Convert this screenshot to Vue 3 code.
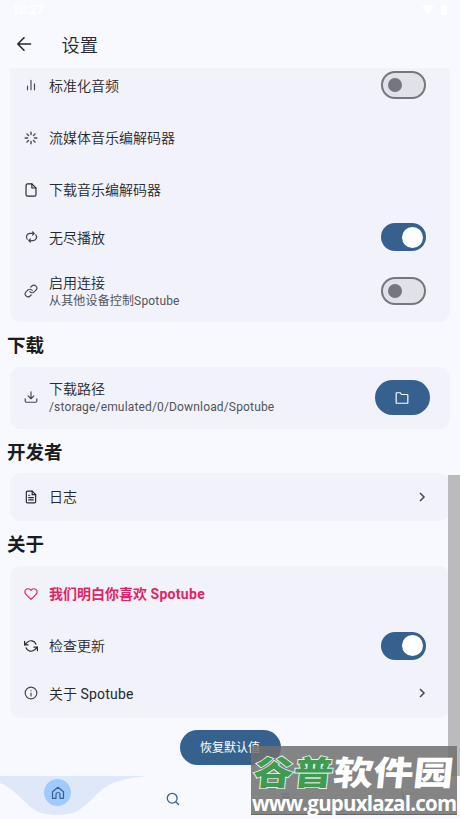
<script setup>
const icons = {
  bars: ['M6 20v-6M12 20V4M18 20V10'],
  loader: ['M12 2v4M12 18v4M4.93 4.93l2.83 2.83M16.24 16.24l2.83 2.83M2 12h4M18 12h4M4.93 19.07l2.83-2.83M16.24 7.76l2.83-2.83'],
  file: ['M13.5 1.5H6a2.5 2.5 0 0 0-2.5 2.5v16A2.5 2.5 0 0 0 6 22.500h12a2.500 2.500 0 0 0 2.500-2.500V8.500z', 'M13.500 1.500v7h7'],
  repeat: ['M14 2.500l3 3-3 3M17 5.500H9a6.500 6.500 0 0 0-5 10.500', 'M10 21.500l-3-3 3-3M7 18.500h8a6.500 6.500 0 0 0 5-10.500'],
  link: ['M10 13a5 5 0 0 0 7.540.54l3-3a5 5 0 0 0-7.070-7.070l-1.720 1.710', 'M14 11a5 5 0 0 0-7.540-.54l-3 3a5 5 0 0 0 7.070 7.070l1.710-1.710'],
  download: ['M22 15v4a2 2 0 0 1-2 2H4a2 2 0 0 1-2-2v-4', 'M7 10l5 5 5-5M12 15V3'],
  doc: ['M14 2H6a2 2 0 0 0-2 2v16a2 2 0 0 0 2 2h12a2 2 0 0 0 2-2V8z', 'M14 2v6h6M16 13H8M16 17H8M10 9H8'],
  heart: ['M20.840 4.610a5.500 5.500 0 0 0-7.780 0L12 5.670l-1.060-1.060a5.500 5.500 0 0 0-7.780 7.780l1.060 1.060L12 21.230l7.780-7.780 1.060-1.060a5.500 5.500 0 0 0 0-7.780z'],
  refresh: ['M1 4v6h6M23 20v-6h-6', 'M20.490 9A9 9 0 0 0 5.640 5.640L1 10m22 4l-4.640 4.360A9 9 0 0 1 3.510 15'],
  info: ['M22 12a10 10 0 1 1-20 0a10 10 0 1 1 20 0z', 'M12 17v-5M12 8v.01']
}

const groups = [
  {
    cls: 'playback',
    rows: [
      { icon: 'bars', title: '标准化音频', h: 49, control: 'off' },
      { icon: 'loader', title: '流媒体音乐编解码器', h: 56 },
      { icon: 'file', title: '下载音乐编解码器', h: 48 },
      { icon: 'repeat', title: '无尽播放', h: 47, control: 'on' },
      { icon: 'link', title: '启用连接', sub: '从其他设备控制Spotube', h: 61, control: 'off' }
    ]
  },
  {
    heading: '下载',
    rows: [{ icon: 'download', title: '下载路径', sub: '/storage/emulated/0/Download/Spotube', h: 62, control: 'folder' }]
  },
  {
    heading: '开发者',
    rows: [{ icon: 'doc', title: '日志', h: 48, control: 'chevron' }]
  },
  {
    heading: '关于',
    rows: [
      { icon: 'heart', title: '我们明白你喜欢 ', app: 'Spotube', h: 57, cls: 'love' },
      { icon: 'refresh', title: '检查更新', h: 47, control: 'on' },
      { icon: 'info', title: '关于 ', app: 'Spotube', h: 48, control: 'chevron' }
    ]
  }
]
</script>

<template>
  <div class="screen">
    <div class="status">
      <span class="clock">10:27</span>
      <svg class="signal" viewBox="0 0 26 12"><path d="M0 3Q6-2 12 3L6 11z" /><path d="M19 1.500h1.500V.5h3v1H25V11h-6z" /></svg>
    </div>
    <header class="appbar">
      <svg class="back" viewBox="0 0 16 16"><path d="M14.500 8H2M8 1.800L1.800 8L8 14.200" /></svg>
      <h1>设置</h1>
    </header>

    <main class="content">
      <section v-for="(g, i) in groups" :key="i">
        <h2 v-if="g.heading">{{ g.heading }}</h2>
        <div class="card" :class="g.cls">
          <div v-for="r in g.rows" :key="r.title" class="row" :class="r.cls" :style="{ height: r.h + 'px' }">
            <svg class="icon" :class="r.icon" viewBox="0 0 24 24">
              <path v-for="d in icons[r.icon]" :key="d" :d="d" />
            </svg>
            <div class="label">
              <div class="title">{{ r.title }}<span v-if="r.app" class="app">{{ r.app }}</span></div>
              <div v-if="r.sub" class="sub">{{ r.sub }}</div>
            </div>
            <span v-if="r.control === 'on' || r.control === 'off'" class="switch" :class="r.control"><i /></span>
            <span v-else-if="r.control === 'folder'" class="folder">
              <svg viewBox="0 0 24 24"><path d="M22 20a1 1 0 0 1-1 1H3a1 1 0 0 1-1-1V4a1 1 0 0 1 1-1h6l2 3h10a1 1 0 0 1 1 1z" /></svg>
            </span>
            <svg v-else-if="r.control === 'chevron'" class="chevron" viewBox="0 0 8 10"><path d="M2 1l4 4-4 4" /></svg>
          </div>
        </div>
      </section>
      <button class="reset">恢复默认值</button>
    </main>

    <nav class="nav">
      <svg class="wave" viewBox="0 0 150 43" preserveAspectRatio="none">
        <path d="M0 0H148C108 3 102 14 90 25C80 34 74 39 57 39C40 39 33 34 24 25C15 16 8 10 0 7z" />
      </svg>
      <span class="home">
        <svg viewBox="0 0 14 14"><path d="M1.500 12.300V5.800L7 1.200l5.500 4.600v6.500H9V8.500a2 2 0 0 0-4 0v3.800z" /></svg>
      </span>
      <svg class="search" viewBox="0 0 14 14"><circle cx="6.200" cy="6.200" r="4.900" /><path d="M9.800 9.800l2.700 2.700" /></svg>
      <svg class="library" viewBox="0 0 14 12"><path d="M2 2h7M2 5h7M2 8h4M9 8h3v3H9z" /></svg>
      <svg class="stats" viewBox="0 0 14 12"><path d="M3 11V7M7 11V1M11 11V5" /></svg>
    </nav>

    <div class="scrollbar"></div>
    <div class="watermark">
      <div class="brand"><b>谷普</b>软件园</div>
      <div class="url">www.gupuxlazal.com</div>
    </div>
  </div>
</template>

<style>
body { background: #f8f9ff; overflow: hidden; }
</style>

<style scoped>
* { box-sizing: border-box; }
.screen {
  position: relative;
  display: flex;
  flex-direction: column;
  width: 460px;
  height: 819px;
  overflow: hidden;
  background: #f8f9ff;
  color: #25282d;
  font-family: Roboto, "Noto Sans CJK SC", sans-serif;
}
svg { fill: none; stroke: currentColor; stroke-linecap: round; stroke-linejoin: round; flex: none; }
.status { display: flex; justify-content: space-between; height: 21px; padding: 4px 12px 0 12px; color: #fff; }
.clock { font-size: 12px; line-height: 13px; font-weight: 500; letter-spacing: .2px; }
.signal { width: 26px; height: 12px; fill: #fff; stroke: none; }
.appbar { display: flex; align-items: center; height: 47px; padding-left: 16px; }
.back { width: 16px; height: 16px; stroke-width: 1.6; margin-top: -1px; }
h1 { margin: 3px 0 0 29.500px; font-size: 18.3px; line-height: 24px; font-weight: 350; }
.content { display: flex; flex-direction: column; height: 708px; }
h2 { margin: 0; padding: 0 0 0 7px; height: 44.500px; line-height: 49px; font-size: 18.500px; font-weight: 700; color: #191c20; }
.card { margin: 0 10px; border-radius: 11px; background: #f2f2fa; overflow: hidden; }
.playback { border-radius: 0 0 11px 11px; height: 254px; display: flex; flex-direction: column; justify-content: flex-end; }
.row { display: flex; flex: none; align-items: center; padding: 0 24px 0 14px; }
.icon { width: 14px; height: 14px; margin-top: -1px; color: #44474e; stroke-width: 2; }
.icon.doc, .icon.refresh, .icon.file { color: #25282d; }
.icon.repeat { width: 13px; margin: -1px .5px 0; stroke-width: 2.300; }
.icon.loader { stroke-width: 2.400; }
.label { flex: 1; padding-left: 11px; white-space: nowrap; }
.title { font-size: 14px; line-height: 19px; padding-top: 1px; font-weight: 350; }
.app { font-weight: 400; letter-spacing: .2px; }
.sub { font-size: 12px; line-height: 17px; letter-spacing: .16px; color: #51545b; }
.love .icon, .love .title { color: #e91e63; }
.love .title, .love .app { font-weight: 700; }
.love .app { letter-spacing: .3px; }
.switch { display: flex; align-items: center; width: 45px; height: 28px; margin-top: -1px; border-radius: 14px; border: 2px solid #74777f; background: #e1e2e8; }
.switch i { width: 14px; height: 14px; margin-left: 5px; border-radius: 50%; background: #74777f; }
.switch.on { border-color: #36618e; background: #36618e; justify-content: flex-end; }
.switch.on i { width: 21px; height: 21px; margin-right: 1.500px; background: #fff; }
.folder { display: flex; align-items: center; justify-content: center; width: 55px; height: 35px; margin-right: -3.500px; border-radius: 18px; background: #36618e; color: #fff; }
.folder svg { width: 14px; height: 14px; stroke-width: 2; }
.chevron { width: 8px; height: 10px; margin-top: -1px; color: #44474e; stroke-width: 1.500; stroke-linecap: butt; stroke-linejoin: miter; }
.reset { align-self: center; width: 101px; height: 35px; margin-top: 12.500px; padding: 0; border: 0; border-radius: 18px; background: #36618e; color: #fff; font: 400 12px/36px Roboto, "Noto Sans CJK SC", sans-serif; }
.nav { position: relative; height: 43px; color: #36618e; }
.wave { position: absolute; left: 0; top: 0; width: 150px; height: 43px; fill: #dfe8f8; stroke: none; }
.home { position: absolute; left: 44px; top: 3px; display: flex; align-items: center; justify-content: center; width: 27px; height: 27px; border-radius: 50%; background: #a0cafd; }
.home svg { width: 14px; height: 14px; stroke-width: 1.200; }
.search { position: absolute; left: 166px; top: 16px; width: 14px; height: 14px; stroke-width: 1.300; }
.library { position: absolute; left: 280px; top: 16px; width: 14px; height: 12px; }
.stats { position: absolute; left: 396px; top: 16px; width: 14px; height: 12px; }
.scrollbar { position: absolute; right: 0; top: 475px; width: 12px; height: 301px; background: #bbbbbd; }
.watermark { position: absolute; left: 251px; top: 746px; width: 206px; height: 69px; background: rgba(112, 112, 112, .85); color: #fff; white-space: nowrap; border-bottom: 1px solid #666; }
.brand { height: 46px; padding-left: 3px; font: 900 40px/50px "Noto Sans CJK SC", sans-serif; transform: scaleY(.84) skewX(-5deg); }
.brand b { font-weight: 900; color: #3f9b52; -webkit-text-stroke: 2px #e8f3ea; paint-order: stroke fill; }
.url { font: 700 20.500px/23px "Open Sans", sans-serif; letter-spacing: -.78px; padding-left: 1px; }
</style>
